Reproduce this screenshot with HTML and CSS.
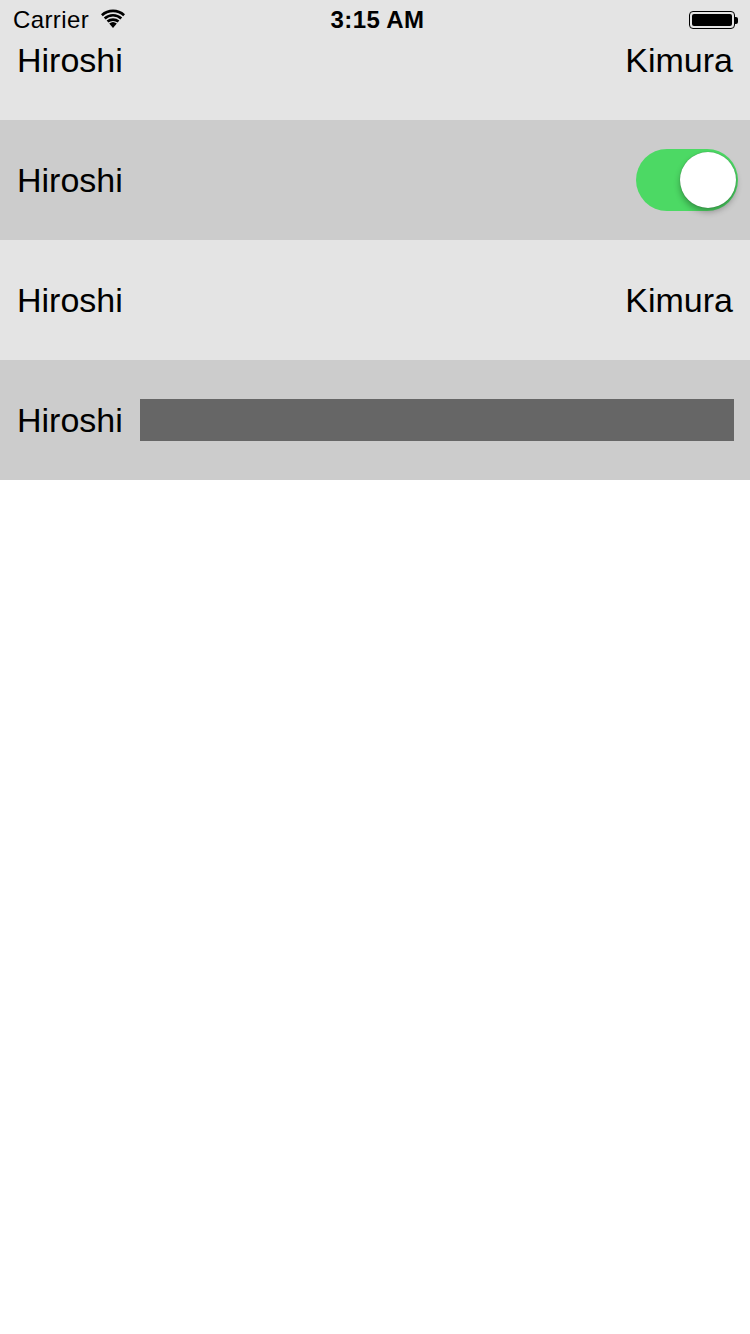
FILE: index.html
```html
<!DOCTYPE html>
<html>
<head>
<meta charset="utf-8">
<link rel="stylesheet" href="styles.css">
</head>
<body>
<div class="screen">
  <div class="statusbar">
    <div class="sb-left">
      <span class="carrier">Carrier</span>
      <svg class="wifi" width="26" height="20" viewBox="0 0 26 20">
        <path d="M13 19 L9.2 14.6 A5.8 5.8 0 0 1 16.8 14.6 Z" fill="#000"/>
        <path d="M6.6 11.6 A9.6 9.6 0 0 1 19.4 11.6 L17.6 13.6 A7 7 0 0 0 8.4 13.6 Z" fill="#000"/>
        <path d="M3.8 8.4 A13.8 13.8 0 0 1 22.2 8.4 L20.4 10.4 A11 11 0 0 0 5.6 10.4 Z" fill="#000"/>
        <path d="M1 5.2 A18 18 0 0 1 25 5.2 L23.2 7.2 A15.2 15.2 0 0 0 2.8 7.2 Z" fill="#000"/>
      </svg>
    </div>
    <div class="sb-time">3:15 AM</div>
    <div class="sb-right">
      <div class="battery"><div class="battery-fill"></div></div>
      <div class="battery-nub"></div>
    </div>
  </div>
  <div class="row light">
    <span class="label">Hiroshi</span>
    <span class="value">Kimura</span>
  </div>
  <div class="row dark">
    <span class="label">Hiroshi</span>
    <div class="switch"><div class="knob"></div></div>
  </div>
  <div class="row light">
    <span class="label">Hiroshi</span>
    <span class="value">Kimura</span>
  </div>
  <div class="row dark">
    <span class="label">Hiroshi</span>
    <div class="field"></div>
  </div>
</div>
</body>
</html>
```

FILE: styles.css
```css
html, body {
  margin: 0;
  padding: 0;
  background: #ffffff;
}
.screen {
  position: relative;
  width: 750px;
  height: 1334px;
  background: #ffffff;
  font-family: "Helvetica Neue", "Liberation Sans", Arial, sans-serif;
  color: #000;
}
.statusbar {
  position: absolute;
  top: 0;
  left: 0;
  right: 0;
  height: 40px;
  display: flex;
  align-items: center;
  justify-content: space-between;
  padding: 0 12px 0 13px;
  box-sizing: border-box;
  z-index: 2;
}
.sb-left {
  display: flex;
  align-items: center;
  gap: 11px;
  width: 200px;
}
.carrier {
  font-size: 24px;
  letter-spacing: 0.4px;
}
.wifi {
  margin-top: -2px;
}
.sb-time {
  font-size: 24px;
  font-weight: bold;
  letter-spacing: 0.4px;
  margin-left: 4px;
}
.sb-right {
  width: 200px;
  display: flex;
  justify-content: flex-end;
  align-items: center;
}
.battery {
  width: 46px;
  height: 18px;
  border: 1px solid #000;
  border-radius: 4px;
  box-sizing: border-box;
  padding: 2px;
}
.battery-fill {
  width: 100%;
  height: 100%;
  background: #000;
  border-radius: 2px;
}
.battery-nub {
  width: 3px;
  height: 7px;
  background: #000;
  border-radius: 0 2px 2px 0;
}
.row {
  height: 120px;
  display: flex;
  align-items: center;
  padding: 0 17px;
  box-sizing: border-box;
  gap: 17px;
}
.row.light {
  background: #e4e4e4;
}
.row.dark {
  background: #cccccc;
}
.label {
  font-size: 34px;
  flex: none;
}
.value {
  font-size: 34px;
  margin-left: auto;
}
.switch {
  margin-left: auto;
  margin-right: -5px;
  width: 102px;
  height: 62px;
  border-radius: 31px;
  background: #4cd964;
  position: relative;
  flex: none;
}
.knob {
  position: absolute;
  right: 2px;
  top: 3px;
  width: 56px;
  height: 56px;
  border-radius: 50%;
  background: #fff;
  box-shadow: 0 4px 6px rgba(0,0,0,0.3), 0 0 1px rgba(0,0,0,0.4);
}
.field {
  flex: 1;
  height: 42px;
  background: #666666;
  margin-right: -1px;
}
```
